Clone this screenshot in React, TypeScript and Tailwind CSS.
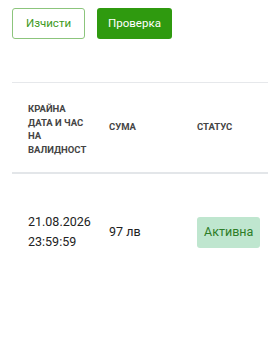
import React from 'react';

const rows = [{ until: ['21.08.2026', '23:59:59'], amount: '97 лв', status: 'Активна' }];

export default function App() {
  return (
    <div className="w-[280px] h-[348px] bg-white font-['Roboto',sans-serif] text-[#222]">
      <div className="flex gap-3 px-3 pt-2">
        <button className="w-[73px] h-[31px] rounded-[3px] border border-[#8cc57c] text-[#3d9a22] text-[11.5px]">
          Изчисти
        </button>
        <button className="w-[75px] h-[31px] rounded-[3px] bg-[#2f9a0f] text-white text-[11.5px]">
          Проверка
        </button>
      </div>

      <div className="mx-3 mt-[43px] border-t border-[#e6e8eb]">
        <table className="w-full table-fixed border-collapse">
          <thead>
            <tr className="border-b-2 border-[#e3e6e9] text-[9.5px] text-[#444] uppercase text-left">
              <th className="w-[81px] pl-4 pr-1 pt-[19px] pb-[16px] leading-[13.5px] font-bold align-middle">
                Крайна дата и час на валидност
              </th>
              <th className="w-[88px] pl-4 font-bold align-middle">Сума</th>
              <th className="pl-4 font-bold align-middle">Статус</th>
            </tr>
          </thead>
          <tbody>
            {rows.map((r) => (
              <tr key={r.until[0]} className="text-[12.5px]">
                <td className="pl-4 pt-[38px] pb-[38px] leading-[20px] align-middle">
                  {r.until[0]}
                  <br />
                  {r.until[1]}
                </td>
                <td className="pl-4 align-middle">{r.amount}</td>
                <td className="pl-4 align-middle">
                  <span className="inline-flex items-center h-[31px] px-[7px] rounded-[3px] bg-[#bfe6cf] text-[#2d7d28]">
                    {r.status}
                  </span>
                </td>
              </tr>
            ))}
          </tbody>
        </table>
      </div>
    </div>
  );
}
